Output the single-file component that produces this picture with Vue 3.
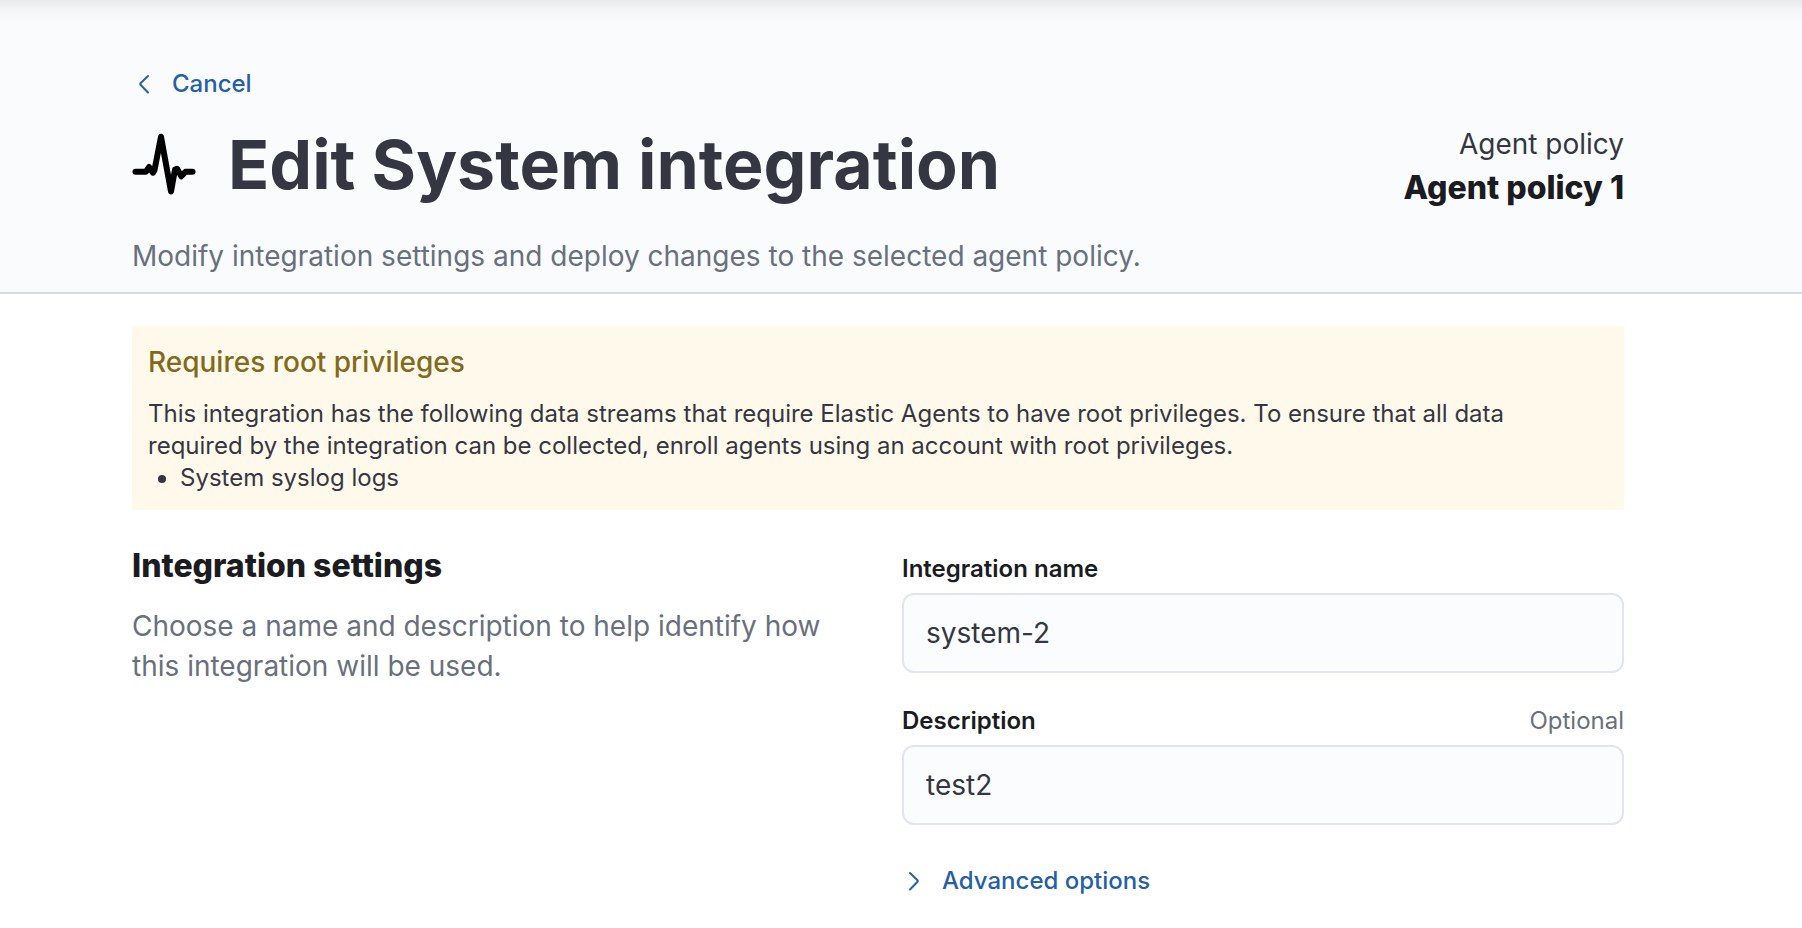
<script setup>
import { ref } from 'vue'

const name = ref('system-2')
const description = ref('test2')
const streams = ['System syslog logs']
</script>

<template>
  <div class="page">
    <header class="header">
      <a class="link" href="#">
        <svg class="chevron" viewBox="0 0 32 32" aria-hidden="true"><path d="M16 8 8.500 15.200Q7.800 16 8.500 16.800L16 24.500" /></svg>
        <span>Cancel</span>
      </a>
      <div class="title-row">
        <div class="title-group">
          <svg class="logo" viewBox="0 0 64 64" aria-hidden="true">
            <path d="M3.500 39.700H14L17 35 21 40.700 22.500 38 29 4.700 39 59.500 43 37.500 45 36.800 49.300 44.300 53.500 39.700H60.500" />
          </svg>
          <h1>Edit System integration</h1>
        </div>
        <dl class="policy">
          <dt>Agent policy</dt>
          <dd>Agent policy 1</dd>
        </dl>
      </div>
      <p class="subdued">Modify integration settings and deploy changes to the selected agent policy.</p>
    </header>

    <main class="content">
      <section class="callout">
        <h2>Requires root privileges</h2>
        <p>
          This integration has the following data streams that require Elastic Agents to have root privileges. To
          ensure that all data required by the integration can be collected, enroll agents using an account with root
          privileges.
        </p>
        <ul>
          <li v-for="stream in streams" :key="stream">{{ stream }}</li>
        </ul>
      </section>

      <section class="settings">
        <div>
          <h3>Integration settings</h3>
          <p class="subdued">Choose a name and description to help identify how this integration will be used.</p>
        </div>
        <form class="fields" @submit.prevent>
          <div class="field">
            <label for="integration-name">Integration name</label>
            <input id="integration-name" v-model="name" type="text" />
          </div>
          <div class="field">
            <div class="label-row">
              <label for="integration-description">Description</label>
              <span>Optional</span>
            </div>
            <input id="integration-description" v-model="description" type="text" />
          </div>
          <button class="link advanced" type="button">
            <svg class="chevron" viewBox="0 0 32 32" aria-hidden="true"><path d="M8 8 15.500 15.200Q16.200 16 15.500 16.800L8 24.500" /></svg>
            <span>Advanced options</span>
          </button>
        </form>
      </section>
    </main>
  </div>
</template>

<style>
body {
  background: #fff;
}
</style>

<style scoped>
.page {
  font-family: Inter, "Liberation Sans", sans-serif;
  font-size: 28px;
  line-height: 40px;
  color: #343741;
}
h1, h2, h3, p, ul, dl, dd {
  margin: 0;
}
.header {
  padding: 68px 178px 16px 132px;
  border-bottom: 2px solid #d3dae6;
  background: linear-gradient(#e9eaeb, #f4f5f6 10px, #fafbfd 24px);
}
.link {
  display: flex;
  align-items: center;
  gap: 8px;
  width: fit-content;
  padding: 0;
  border: 0;
  background: none;
  color: #2460a7;
  font: 500 24px/32px Inter, "Liberation Sans", sans-serif;
  text-decoration: none;
  cursor: pointer;
}
.chevron {
  width: 32px;
  height: 32px;
  fill: none;
  stroke: currentColor;
  stroke-width: 2;
  stroke-linecap: round;
  stroke-linejoin: round;
}
.title-row {
  display: flex;
  justify-content: space-between;
  align-items: flex-start;
  margin: 24px 0;
}
.title-group {
  display: flex;
  align-items: center;
  gap: 32px;
}
.logo {
  width: 64px;
  height: 64px;
  fill: none;
  stroke: #000;
  stroke-width: 6;
  stroke-linecap: round;
  stroke-linejoin: round;
}
h1 {
  font-size: 68px;
  line-height: 80px;
  font-weight: 700;
}
.policy {
  text-align: right;
}
.policy dd {
  color: #1a1c21;
  font-size: 32px;
  line-height: 48px;
  font-weight: 800;
}
.subdued {
  color: #69707d;
}
.content {
  padding: 32px 178px 32px 132px;
}
.callout {
  padding: 16px 32px 16px 16px;
  background: #fff9eb;
  font-size: 24px;
  line-height: 32px;
}
.callout h2 {
  margin-bottom: 16px;
  color: #83691c;
  font-size: 28px;
  line-height: 40px;
  font-weight: 500;
}
.callout ul {
  padding-left: 32px;
}
.settings {
  display: grid;
  grid-template-columns: 1fr 1fr;
  gap: 48px;
  margin-top: 32px;
}
h3 {
  margin-bottom: 16px;
  color: #1a1c21;
  font-size: 32px;
  line-height: 48px;
  font-weight: 800;
}
.fields {
  display: flex;
  flex-direction: column;
  gap: 32px;
  padding-top: 11px;
}
.field {
  display: flex;
  flex-direction: column;
  gap: 8px;
  font-size: 24px;
  line-height: 32px;
}
.label-row {
  display: flex;
  justify-content: space-between;
  color: #69707d;
}
label {
  color: #1a1c21;
  font-weight: 600;
}
input {
  box-sizing: border-box;
  width: 100%;
  height: 80px;
  padding: 0 22px;
  border: 2px solid #e3e4f2;
  border-radius: 12px;
  background: #fbfcfd;
  color: #343741;
  font: 400 28px/40px Inter, "Liberation Sans", sans-serif;
}
.advanced {
  margin-top: 8px;
}
</style>
